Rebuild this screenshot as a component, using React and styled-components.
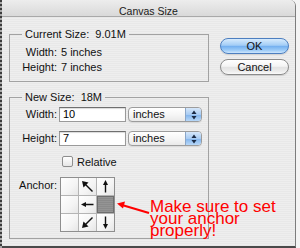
import React from "react";
import styled, { createGlobalStyle } from "styled-components";

const Global = createGlobalStyle`
  html, body { margin: 0; padding: 0; background: #f4f4f4; }
  body { font-family: "Liberation Sans", Arial, sans-serif; }
  * { box-sizing: border-box; }
`;

const Page = styled.div`
  position: relative;
  width: 300px;
  height: 248px;
  overflow: hidden;
  display: flex;
  background: #f4f4f4;
`;

const Edge = styled.div`
  width: 2px;
  height: 248px;
  flex: none;
  background: repeating-linear-gradient(to bottom, #3c3c3c 0 2px, #a8a8a8 2px 4px);
`;

const Window = styled.div`
  width: 294px;
  height: 248px;
  flex: none;
  display: flex;
  flex-direction: column;
  border-right: 1px solid #7d7d7d;
  border-bottom: 2px solid #4a4a4a;
  border-top-right-radius: 6px;
  overflow: hidden;
  background: repeating-linear-gradient(to bottom, #eeeeee 0 1px, #e8e8e8 1px 2px);
`;

const TitleBar = styled.div`
  height: 17px;
  flex: none;
  border-bottom: 1px solid #a9a9a9;
  background: linear-gradient(to bottom, #ededed, #d9d9d9);
  text-align: center;
  font-size: 10.5px;
  line-height: 12px;
  padding-top: 5px;
  color: #1a1a1a;
`;

const Content = styled.div`
  flex: 1;
  display: flex;
  gap: 11px;
  padding: 10px 0 0 7px;
`;

const LeftCol = styled.div`
  width: 200px;
  display: flex;
  flex-direction: column;
`;

const Group = styled.fieldset`
  margin: ${(p) => (p.$first ? "0" : "8px 0 0 0")};
  padding: ${(p) => p.$pad};
  border: 1px solid #a2a2a2;
  min-width: 0;
  width: 200px;
`;

const Legend = styled.legend`
  margin-left: 12px;
  padding: 0 3px;
  font-size: 11px;
  line-height: 14px;
  color: #111;
  white-space: pre;
`;

const InfoGrid = styled.div`
  display: grid;
  grid-template-columns: 47px auto;
  column-gap: 4px;
  font-size: 11px;
  line-height: 15px;
  color: #111;
`;

const Label = styled.span`
  text-align: right;
  font-size: 11px;
  color: #111;
`;

const FieldRow = styled.div`
  display: grid;
  grid-template-columns: 47px 67px 74px;
  column-gap: 2px;
  align-items: center;
  height: 15px;
  margin-top: ${(p) => p.$mt || 0}px;
  line-height: 15px;
`;

const TextInput = styled.div`
  height: 15px;
  background: #fff;
  border: 1px solid #9a9a9a;
  border-top-color: #6f6f6f;
  box-shadow: inset 0 1px 1px rgba(0, 0, 0, 0.15);
  font-size: 11px;
  line-height: 13px;
  padding-left: 3px;
  color: #000;
`;

const Popup = styled.div`
  height: 15px;
  display: flex;
  border: 1px solid #9c9c9c;
  border-radius: 4px;
  overflow: hidden;
  background: linear-gradient(to bottom, #ffffff 0%, #f6f6f6 50%, #e9e9e9 100%);
  box-shadow: 0 1px 0 rgba(0, 0, 0, 0.08);
`;

const PopupText = styled.span`
  flex: 1;
  font-size: 11px;
  line-height: 13px;
  padding-left: 4px;
  color: #111;
`;

const Stepper = styled.span`
  width: 16px;
  flex: none;
  display: flex;
  align-items: center;
  justify-content: center;
  border-left: 1px solid #8aa6c8;
  background: linear-gradient(to bottom, #d6e7fa 0%, #a9ccf3 50%, #80b3ec 51%, #b8d8f8 100%);
`;

const CheckRow = styled.label`
  display: flex;
  align-items: center;
  gap: 4px;
  height: 15px;
  margin-top: 8px;
  padding-left: 52px;
  font-size: 11px;
  color: #111;
`;

const CheckBox = styled.span`
  width: 11px;
  height: 11px;
  border: 1px solid #8e8e8e;
  border-radius: 2px;
  background: linear-gradient(to bottom, #ffffff, #e6e6e6);
`;

const AnchorRow = styled.div`
  display: grid;
  grid-template-columns: 47px 55px;
  column-gap: 3px;
  margin-top: 8px;
  align-items: start;
`;

const AnchorLabel = styled(Label)`
  line-height: 15px;
  margin-top: 1px;
`;

const AnchorGrid = styled.div`
  display: grid;
  grid-template-columns: repeat(3, 17px);
  grid-template-rows: repeat(3, 17px);
  gap: 1px;
  padding: 0;
  border: 1px solid #8e8e8e;
  background: #b4b4b4;
  width: 55px;
  height: 55px;
`;

const Cell = styled.div`
  display: flex;
  align-items: center;
  justify-content: center;
  background: ${(p) =>
    p.$selected
      ? "repeating-linear-gradient(to bottom, #8a8a8a 0 1px, #949494 1px 2px)"
      : "linear-gradient(135deg, #ffffff 0%, #f4f4f4 60%, #e6e6e6 100%)"};
  box-shadow: ${(p) => (p.$selected ? "inset 0 0 0 1px #6e6e6e" : "none")};
`;

const RightCol = styled.div`
  width: 69px;
  display: flex;
  flex-direction: column;
  gap: 5px;
  padding-top: 11px;
`;

const AquaButton = styled.div`
  height: 16px;
  border-radius: 8px;
  text-align: center;
  font-size: 11px;
  line-height: 14px;
  color: #111;
  border: 1px solid ${(p) => (p.$primary ? "#4d7fc0" : "#8b8b8b")};
  background: ${(p) =>
    p.$primary
      ? "linear-gradient(to bottom, #d7ebfd 0%, #a3cdf6 45%, #74b0f0 52%, #9ccbf7 80%, #cde6fd 100%)"
      : "linear-gradient(to bottom, #ffffff 0%, #f4f4f4 45%, #e3e3e3 52%, #ececec 80%, #fafafa 100%)"};
  box-shadow: 0 1px 1px rgba(0, 0, 0, 0.12);
`;

const Note = styled.div`
  position: absolute;
  left: 150px;
  top: 201px;
  font-family: "Liberation Sans", Arial, sans-serif;
  font-size: 17px;
  line-height: 12px;
  color: #ff0000;
  white-space: pre;
`;

const Pointer = styled.svg`
  position: absolute;
  left: 112px;
  top: 196px;
`;

const Icon = ({ dir }) => {
  const s = { stroke: "#111", strokeWidth: 1.4, fill: "none" };
  const h = { fill: "#111" };
  if (dir === "up")
    return (
      <svg width="17" height="17" viewBox="0 0 17 17">
        <line x1="8.5" y1="14.5" x2="8.5" y2="5" {...s} />
        <polygon points="8.5,2 6,7 11,7" {...h} />
      </svg>
    );
  if (dir === "down")
    return (
      <svg width="17" height="17" viewBox="0 0 17 17">
        <line x1="8.5" y1="2.5" x2="8.5" y2="12" {...s} />
        <polygon points="8.5,15 6,10 11,10" {...h} />
      </svg>
    );
  if (dir === "left")
    return (
      <svg width="17" height="17" viewBox="0 0 17 17">
        <line x1="14.5" y1="8.5" x2="5" y2="8.5" {...s} />
        <polygon points="2,8.5 7,6 7,11" {...h} />
      </svg>
    );
  if (dir === "nw")
    return (
      <svg width="17" height="17" viewBox="0 0 17 17">
        <line x1="13.5" y1="13.5" x2="5.5" y2="5.5" {...s} />
        <polygon points="3,3 9.5,4.5 4.5,9.5" {...h} />
      </svg>
    );
  if (dir === "sw")
    return (
      <svg width="17" height="17" viewBox="0 0 17 17">
        <line x1="13.5" y1="3.5" x2="5.5" y2="11.5" {...s} />
        <polygon points="3,14 4.5,7.5 9.5,12.5" {...h} />
      </svg>
    );
  return null;
};

const StepIcon = () => (
  <svg width="6" height="10" viewBox="0 0 6 10">
    <polygon points="3,0.5 0.5,4 5.5,4" fill="#1b2b45" />
    <polygon points="3,9.5 0.5,6 5.5,6" fill="#1b2b45" />
  </svg>
);

const anchorCells = [
  null, "nw", "up",
  null, "left", "sel",
  null, "sw", "down",
];

export default function App() {
  return (
    <>
      <Global />
      <Page>
        <Edge />
        <Window>
          <TitleBar>Canvas Size</TitleBar>
          <Content>
            <LeftCol>
              <Group $first $pad="4px 0 6px 0">
                <Legend>{"Current Size:  9.01M"}</Legend>
                <InfoGrid>
                  <Label>Width:</Label>
                  <span>5 inches</span>
                  <Label>Height:</Label>
                  <span>7 inches</span>
                </InfoGrid>
              </Group>
              <Group $pad="3px 0 6px 0">
                <Legend>{"New Size:  18M"}</Legend>
                <FieldRow>
                  <Label>Width:</Label>
                  <TextInput>10</TextInput>
                  <Popup>
                    <PopupText>inches</PopupText>
                    <Stepper>
                      <StepIcon />
                    </Stepper>
                  </Popup>
                </FieldRow>
                <FieldRow $mt={9}>
                  <Label>Height:</Label>
                  <TextInput>7</TextInput>
                  <Popup>
                    <PopupText>inches</PopupText>
                    <Stepper>
                      <StepIcon />
                    </Stepper>
                  </Popup>
                </FieldRow>
                <CheckRow>
                  <CheckBox />
                  Relative
                </CheckRow>
                <AnchorRow>
                  <AnchorLabel>Anchor:</AnchorLabel>
                  <AnchorGrid>
                    {anchorCells.map((c, i) => (
                      <Cell key={i} $selected={c === "sel"}>
                        {c && c !== "sel" ? <Icon dir={c} /> : null}
                      </Cell>
                    ))}
                  </AnchorGrid>
                </AnchorRow>
              </Group>
            </LeftCol>
            <RightCol>
              <AquaButton $primary>OK</AquaButton>
              <AquaButton>Cancel</AquaButton>
            </RightCol>
          </Content>
        </Window>
        <Pointer width="42" height="22" viewBox="0 0 42 22">
          <line x1="37" y1="17" x2="10" y2="9" stroke="#ff0000" strokeWidth="2" />
          <polygon points="5,7.5 13,5.5 11,12.5" fill="#ff0000" />
        </Pointer>
        <Note>{"Make sure to set\nyour anchor\nproperly!"}</Note>
      </Page>
    </>
  );
}
